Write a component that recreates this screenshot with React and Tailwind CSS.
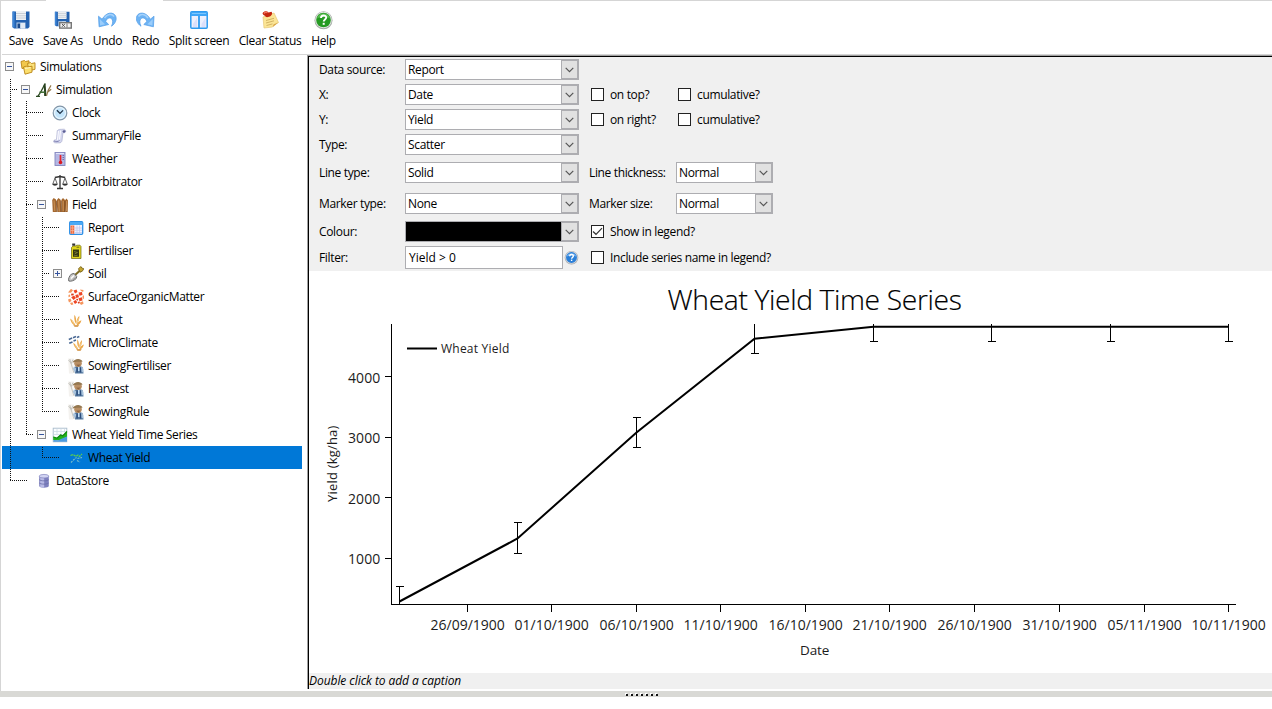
import React from 'react';

/* ---------- toolbar icons (20 x 20) ---------- */

const Floppy = () => (
  <>
    <path d="M1.500 1.500h17v15.500l-1.500 1.500H3L1.500 17z" fill="#2462b0" />
    <path d="M1.500 1.500h2v16h-2z" fill="#3f86d6" />
    <path d="M5 1h10v9H5z" fill="#eef1f4" />
    <path d="M5 3.500h10M5 5.800h10M5 8h10" stroke="#c3cad2" strokeWidth="0.900" />
    <path d="M5.500 12.500h9v6h-9z" fill="#b9cfe6" />
    <path d="M6.500 13.500h2.500v4.500H6.500z" fill="#1c4a8c" />
    <path d="M10 13h4v5.500h-4z" fill="#e3ebf4" />
  </>
);

const CurvedArrow = () => (
  <>
    <path
      d="M1 6.200L1.600 16.800l9.600-2.300-3-2.900C9 8.600 12 6.800 14 8.600c1.600 1.600 1.600 4.400 0 7.600 4-2.600 5.500-7 4.200-10C16.200 2 9.400 1.200 4.600 9.200z"
      fill="#6db3f4"
      stroke="#5aa2ea"
      strokeWidth="0.800"
      strokeLinejoin="round"
    />
    <path d="M7 8c2.500-4 7.500-4.800 9.500-1.500" stroke="#a5d2fb" strokeWidth="1.600" fill="none" />
    <path d="M2.200 9l.4 6.500 5-1.200z" fill="#9bcdfb" />
  </>
);

const toolIcons = {
  save: (
    <svg width="20" height="20" viewBox="0 0 20 20">
      <Floppy />
    </svg>
  ),
  saveAs: (
    <svg width="20" height="20" viewBox="0 0 20 20">
      <g transform="translate(0.600 0.400) scale(0.860)">
        <Floppy />
      </g>
      <rect x="6.700" y="12.700" width="11.600" height="5.400" fill="#f2f2f2" stroke="#777" strokeWidth="1.400" />
      <path d="M9 14l2.800 2.800M11.800 14L9 16.800" stroke="#444" strokeWidth="0.900" />
      <path d="M14 13.500v4" stroke="#777" strokeWidth="1" />
    </svg>
  ),
  undo: (
    <svg width="20" height="20" viewBox="0 0 20 20">
      <g transform="translate(-0.500 0)">
        <CurvedArrow />
      </g>
    </svg>
  ),
  redo: (
    <svg width="20" height="20" viewBox="0 0 20 20">
      <g transform="translate(19 0) scale(-1 1)">
        <CurvedArrow />
      </g>
    </svg>
  ),
  split: (
    <svg width="20" height="20" viewBox="0 0 20 20">
      <rect x="1.800" y="1.800" width="16.400" height="16.400" rx="1" fill="#eef0fd" stroke="#2f9af0" strokeWidth="1.500" />
      <path d="M2 2h16v4H2z" fill="#3fa6f7" />
      <path d="M3 3h14v1H3z" fill="#7cc6ff" />
      <path d="M10 6v12" stroke="#2f9af0" strokeWidth="1.800" />
      <path d="M4 14l4-6v9H4zM12.500 14l4-6v9h-4z" fill="#dcdffa" />
    </svg>
  ),
  clear: (
    <svg width="20" height="20" viewBox="0 0 20 20">
      <path d="M3 7L14 3l4.500 9.500-4.500 2-1.500 2.500-8.500 1z" fill="#fbe596" stroke="#e6c878" strokeWidth="0.700" />
      <path d="M13.500 14.500l5-2-5.600 4.600z" fill="#d9a441" />
      <path d="M6 10.500l8-2.200M6 13l8-2.200M6.500 15.500l6-1.600" stroke="#c8a658" strokeWidth="0.800" />
      <path d="M2.500 3.200c1.500-2.300 4.500-2.500 6-.8l3-.7c1.500 1.500 0 4.500-2.500 5-2 .8-3.500.5-4-.9-1-.3-2-1-2.500-2.600z" fill="#c4260f" />
      <path d="M4 3.500c1-1.500 2.500-1.500 3.500-.7" stroke="#f0705a" strokeWidth="1.400" fill="none" />
    </svg>
  ),
  help: (
    <svg width="20" height="20" viewBox="0 0 20 20">
      <circle cx="9.500" cy="10.300" r="9" fill="#a3aaa4" />
      <circle cx="9.500" cy="10" r="8.300" fill="#e4e8e4" />
      <circle cx="9.500" cy="10" r="7.300" fill="#259a22" />
      <path d="M3 8.500a6.700 6.700 0 0113 0C12.500 6.500 6.500 6.500 3 8.500z" fill="#6cc964" opacity=".7" />
      <path d="M7 8c0-3.400 5.200-3.200 5.200-.4 0 1.900-2.500 1.900-2.500 4" stroke="#fff" strokeWidth="1.900" fill="none" />
      <rect x="8.700" y="12.800" width="2" height="2" fill="#fff" />
    </svg>
  ),
};

/* ---------- tree icons (16 x 16) ---------- */

const Farmer = (
  <>
    <path d="M0 .5h6l-1 15H1z" fill="#f4f2ef" />
    <path d="M0.500 2l3 4M1.800 1l1.300 4.500L5 1.500M3.200 6L6 15" stroke="#bdbbb5" strokeWidth="0.800" fill="none" />
    <path d="M6.200 9l4-1.500 4.300 1.500 1 6.500H7z" fill="#55789f" />
    <path d="M6 8.500L4.800 11l2.400 3.500 1.200-4zM13.200 8.500l2.300 2.500v4l-2-1.500z" fill="#a9c3dc" />
    <path d="M8.500 9.500h1.300v5H8.500zM11.800 9.500H13v5h-1.200z" fill="#2b4c7c" />
    <path d="M10 9h1.500v4H10z" fill="#c2dcf2" />
    <ellipse cx="10" cy="5.300" rx="3.800" ry="3.600" fill="#b98f64" />
    <path d="M4.500 4.600C6 .3 13-.3 14.600 3.600c-2 .6-6.500-.4-10.100 1z" fill="#94774f" />
    <path d="M8 6.800l4.500-.2-2 2z" fill="#8d6340" />
  </>
);

const wheatStalks = (
  <>
    <path d="M7.500 14C6 10 4 7.500 1.500 6c.4 3.500 2.500 7 6 8zM7.800 12C6 8.500 5.800 5 6.300 2c1.800 2.500 2.300 6 1.500 10zM8.500 12.500c-.5-4 1-7 3.200-9.500.3 3.500-.8 7-3.200 9.500zM8.500 14c1-3.500 3-5 5.500-6-.6 3-2.500 5.500-5.500 6z" fill="#eba748" />
    <path d="M5 13.500h6.500l-1.500 1.700H6.500z" fill="#d08a32" />
    <path d="M3.300 8.500L6.500 12.500M11 6L9 11" stroke="#fbdca0" strokeWidth="0.900" />
  </>
);

const treeIcons = {
  folders: (
    <>
      <path d="M1 2.500l3.500-1 1 1 3.500-.7v6.500L2 9.500z" fill="#f2c84c" stroke="#b98516" strokeWidth="0.900" />
      <path d="M7.500 4.500l3-1 1 1 3.500-.7v6.500l-6 1.500z" fill="#fbe27c" stroke="#b98516" strokeWidth="0.900" />
      <path d="M3.500 8l3-1 1 1 4.500-.8v6l-7 2z" fill="#fbdf6e" stroke="#b98516" strokeWidth="0.900" />
      <path d="M5 9.500l5.500-1" stroke="#fff6c4" strokeWidth="1" />
    </>
  ),
  apsim: (
    <>
      <path d="M0 14.300h4M1.800 14.200C4.500 11 7 6 9 1.500" stroke="#2c4a22" strokeWidth="1.300" fill="none" />
      <path d="M7.800 3L9.500 1.200 10.500 14H8.200z" fill="#28401e" />
      <path d="M3.500 10.200h6" stroke="#3c6a30" strokeWidth="1.500" />
      <path d="M10.500 13.800c.5-3.500 2-7 4.500-10.500M11.200 10.500l4-3.300" stroke="#94794a" strokeWidth="1.200" fill="none" />
    </>
  ),
  clock: (
    <>
      <circle cx="8" cy="8" r="6.800" fill="#d3ebfb" stroke="#8296a8" strokeWidth="1.200" />
      <circle cx="8" cy="8" r="5.400" fill="#c3e5fb" stroke="#f4fbff" strokeWidth="0.800" />
      <path d="M4.900 5.200L8 8.400l3-3" stroke="#1f3044" strokeWidth="1.300" fill="none" />
    </>
  ),
  scroll: (
    <>
      <path d="M5.500 2.500c1-1.500 3-1 6-1.300 2.500-.2 3 3 1 3.500h-1.500l-1 8c-.3 1.500-1.500 2.300-3 2.200-2.300-.1-4.500.5-5.500-1 0-1.500.6-2 2-2 1.500-.2 1-3 1.800-9.400z" fill="#d4d6ee" stroke="#a5a7c9" strokeWidth="0.600" />
      <path d="M6.500 3l-1 9M8.500 2.500l-1 9" stroke="#fafaff" strokeWidth="1.200" />
      <path d="M10.500 3.800c0-2 3.500-2 3 0-.3 1-2 1-2 1z" fill="#5d5f96" />
      <path d="M2 13c2 1 4 .8 5.500-.5" stroke="#7a7cae" fill="none" strokeWidth="0.900" />
    </>
  ),
  thermometer: (
    <>
      <rect x="3" y="1.500" width="10" height="13" fill="#b4b7e4" stroke="#8386bd" strokeWidth="0.900" />
      <path d="M4 2.500h8" stroke="#e2e3fa" />
      <path d="M8.500 4v7" stroke="#e8242a" strokeWidth="1.700" />
      <circle cx="8.500" cy="11.500" r="1.800" fill="#d81a22" />
      <path d="M10.500 4.500H12M10.500 6.500H12M10.500 8.500H12" stroke="#5d60a0" strokeWidth="0.800" />
    </>
  ),
  scales: (
    <>
      <path d="M8 1v13M2.800 3.500L8 2.500l5.200 1M5 14.500h6" stroke="#333" strokeWidth="1.300" fill="none" />
      <path d="M3 4L.8 10h4.400zM13 4l-2.200 6h4.400z" stroke="#555" strokeWidth="0.900" fill="none" />
      <path d="M.3 10h5.400c-.5 2.200-4.900 2.200-5.400 0zM10.300 10h5.400c-.5 2.200-4.900 2.200-5.400 0z" fill="#333" />
    </>
  ),
  fence: (
    <>
      <path d="M.2 3l1.500-2 2.300 1.500.8 12.500H.8zM4.500 3.500L6.500 1l2.300 2 .5 12H5.500zM9.300 3l1.700-2 2 2v12H9.600zM12.800 3.500l1.700-2 1.500 2-.3 11.500h-2.400z" fill="#a5682f" />
      <path d="M2 3.500l.8 10.500M6.700 3.500l.6 11M11.200 4v10M14.700 4l-.3 10" stroke="#cd9860" strokeWidth="0.900" />
      <path d="M4.300 4l.7 11M9.100 4l.2 11M12.900 4v11" stroke="#6b3e18" strokeWidth="0.700" />
    </>
  ),
  table: (
    <>
      <rect x="1.700" y="1.700" width="13" height="12.600" rx="1" fill="#eef1fd" stroke="#2b8fe6" strokeWidth="1.300" />
      <path d="M2 2h12.500v3H2z" fill="#4aaaf5" />
      <path d="M2.500 5.500h3.800v8.300H2.500z" fill="#f26a3d" />
      <path d="M6.500 8h7.500M6.500 10.300h7.500M6.500 12.500h7.500M9 5.500v8.500M11.500 5.500v8.500" stroke="#c1c8ee" strokeWidth="0.800" />
      <path d="M4.400 5.500v8.300M2.500 8h3.800M2.500 10.500h3.800" stroke="#f9b49a" strokeWidth="0.700" />
    </>
  ),
  jerrycan: (
    <>
      <path d="M3.500 4.500l1.500-1.500h3l.5-.8h3.500l1 1.300v12H3.500z" fill="#e0d61e" stroke="#6b660c" strokeWidth="0.700" />
      <path d="M4.200.5h3v2.200h-3z" fill="#333" />
      <path d="M8.500 4.200h2.800" stroke="#4e4a08" strokeWidth="0.800" />
      <path d="M5 6.500h6v7.300H5z" fill="#36380f" />
      <path d="M6 8.500l3.500 1M6.500 11l3-1.500M6 12.800l3.500-.5" stroke="#8e8e40" strokeWidth="0.700" />
    </>
  ),
  shovel: (
    <>
      <path d="M6.500 9.500L12 4.500" stroke="#7d6a24" strokeWidth="2" />
      <path d="M10.500 2.800l2.300-2.300 1 1.500 2 .7-1.500 2.500-2.300 1z" fill="#c4a531" stroke="#7b6518" strokeWidth="0.900" />
      <path d="M3.500 8l2.700-.5 2.500 3-.5 2C6.200 14.500 3 15.700.8 15c-.8-2.500.7-5 2.700-7z" fill="#c8c8c8" stroke="#666" strokeWidth="1" />
      <path d="M3 12.500l3-3" stroke="#fff" strokeWidth="1.300" />
      <path d="M4.500 14l3-2.500" stroke="#8a8a8a" strokeWidth="0.900" />
    </>
  ),
  organic: (
    <>
      <path
        d="M5.500 1.500l3-1 1 2.500-2.500 1.500zM10.500 3.500l3.500-.5.500 3-3 .8zM7.300 6l3-.8.700 3-2.800.8zM3.200 8.300L6 6.500l2 2.500-2.500 2zM10.500 9.300l3.500-1 .5 3.200-3 .7zM5.300 12.500l2.200-1.600 2 2.300L7 15z"
        fill="#ee4524"
      />
      <path
        d="M0 3.500L3-.2l2 1.500-2 2.500zM0 10.500l2.500-1 1 2.500-2.500 1.500zM12 .5l3.500.5-.3 2-2.200-1zM14.500 7l1.500-.8V10l-1.500-.8zM11.500 13.800l3.500-1.500.5 2.500-2.500 1.200zM2 14l2.500-.8.800 2.300-2 .5zM.5 6l1.500-.5.300 2-1.800.7z"
        fill="#f6955c"
      />
      <path d="M3 4.800l2.500-.3.300 1.500-2.300.8zM8.500 9.800l1.700.3-.5 1.600-1.500-.6zM9.800 13.300l1.500-1 .6 1.700-1.500.8z" fill="#d83a1c" />
    </>
  ),
  wheat: <g transform="translate(0.800 1) scale(0.900)">{wheatStalks}</g>,
  microclimate: (
    <>
      <g transform="translate(4 2.500) scale(0.850 0.870)">{wheatStalks}</g>
      <path d="M.8 4.500l3.300-1.400M5 2.700l3-1.200M1.200 8.300l3.300-1.400M5.500 6l2.500-1M9 2.500l2.300-.9" stroke="#4a6994" strokeWidth="1.600" />
    </>
  ),
  farmer: Farmer,
  graph: (
    <>
      <rect x="1.200" y="1.200" width="13.600" height="13.600" fill="#fbfdff" stroke="#a9bccb" strokeWidth="0.900" />
      <path d="M1.500 4.500h13M5 1.500v6M9 1.500v6M12.500 1.500v4M1.500 7.500h13" stroke="#c9d7e2" strokeWidth="0.700" />
      <path d="M1.200 9.500l3.500 1.200L8.500 7.500l2 1 4.500-4.500v6l-7 3.500-6.800-.5z" fill="#22b21e" />
      <path d="M1.500 13l5 .3L10 11.500l5-2v5.200H1.500z" fill="#4c9be0" />
      <path d="M1.500 10l3.500 1.200L8.700 8l2 .8L15 4.500" stroke="#12880f" strokeWidth="1.100" fill="none" />
    </>
  ),
  series: (
    <>
      <path d="M2.500 5.500L5 4.500l3 2L10 5l1.500 1.500L14 4" stroke="#5fd04a" strokeWidth="1.200" fill="none" strokeDasharray="2.500 0.800" />
      <path d="M3 12.500L6 9.500l2.500-2M9.500 8.500l4.500-1M9 10.500l3 1.500" stroke="#7fc0c8" strokeWidth="1.100" fill="none" strokeDasharray="2 1" />
    </>
  ),
  database: (
    <>
      <path d="M3.200 3.200v9.800c0 2.200 9.600 2.200 9.600 0V3.200z" fill="#7d80bf" />
      <path d="M4.200 4v10c1.200.6 2.500.8 4 .8V4z" fill="#b9bbe6" />
      <ellipse cx="8" cy="3.200" rx="4.800" ry="1.800" fill="#d2d4f2" stroke="#8083bd" strokeWidth="0.700" />
      <path d="M3.200 6.500c1 1.800 8.600 1.800 9.600 0M3.200 9.800c1 1.800 8.600 1.800 9.600 0" stroke="#6a6da8" strokeWidth="0.800" fill="none" />
    </>
  ),
};

/* guides: for every depth column, does the vertical line run through the row? */
const tree = [
  { label: 'Simulations', icon: 'folders', depth: 0, box: '-', guides: [] },
  { label: 'Simulation', icon: 'apsim', depth: 1, box: '-', guides: ['full'] },
  { label: 'Clock', icon: 'clock', depth: 2, guides: ['full', 'full'] },
  { label: 'SummaryFile', icon: 'scroll', depth: 2, guides: ['full', 'full'] },
  { label: 'Weather', icon: 'thermometer', depth: 2, guides: ['full', 'full'] },
  { label: 'SoilArbitrator', icon: 'scales', depth: 2, guides: ['full', 'full'] },
  { label: 'Field', icon: 'fence', depth: 2, box: '-', guides: ['full', 'full'] },
  { label: 'Report', icon: 'table', depth: 3, guides: ['full', 'full', 'full'] },
  { label: 'Fertiliser', icon: 'jerrycan', depth: 3, guides: ['full', 'full', 'full'] },
  { label: 'Soil', icon: 'shovel', depth: 3, box: '+', guides: ['full', 'full', 'full'] },
  { label: 'SurfaceOrganicMatter', icon: 'organic', depth: 3, guides: ['full', 'full', 'full'] },
  { label: 'Wheat', icon: 'wheat', depth: 3, guides: ['full', 'full', 'full'] },
  { label: 'MicroClimate', icon: 'microclimate', depth: 3, guides: ['full', 'full', 'full'] },
  { label: 'SowingFertiliser', icon: 'farmer', depth: 3, guides: ['full', 'full', 'full'] },
  { label: 'Harvest', icon: 'farmer', depth: 3, guides: ['full', 'full', 'full'] },
  { label: 'SowingRule', icon: 'farmer', depth: 3, guides: ['full', 'full', 'half'] },
  { label: 'Wheat Yield Time Series', icon: 'graph', depth: 2, box: '-', guides: ['full', 'half'] },
  { label: 'Wheat Yield', icon: 'series', depth: 3, guides: ['full', 'none', 'half'], selected: true },
  { label: 'DataStore', icon: 'database', depth: 1, guides: ['half'] },
];

function TreeRow({ row, index }) {
  const w = row.depth * 16 + 18;
  const lineX = row.depth * 16 - 8;
  return (
    <div className={row.selected ? 'flex h-[23px] w-[300px] items-center bg-[#0078d7]' : 'flex h-[23px] w-[300px] items-center'}>
      <svg className="shrink-0" width={w} height="23" shapeRendering="crispEdges">
        {row.guides.map((g, i) =>
          g === 'none' ? null : (
            <line key={i} x1={i * 16 + 8.5} x2={i * 16 + 8.5} y1="0" y2={g === 'full' ? 23 : 12} stroke="#111" strokeDasharray="1 1" strokeDashoffset={index % 2} />
          )
        )}
        {row.depth > 0 && <line x1={lineX} x2={lineX + (row.box ? 7 : 17)} y1="11.500" y2="11.500" stroke="#111" strokeDasharray="1 1" />}
        {row.box && (
          <>
            <rect x={row.depth * 16 + 3.5} y="7.500" width="8" height="8" fill="#f7f7f7" stroke="#8c8c8c" />
            <path d={`M${row.depth * 16 + 5} 11.500h5${row.box === '+' ? 'm-2.500-2.500v5' : ''}`} stroke="#35549e" fill="none" />
          </>
        )}
      </svg>
      <svg className="mr-[4px] shrink-0" width="16" height="16" viewBox="0 0 16 16">
        {treeIcons[row.icon]}
      </svg>
      <span>{row.label}</span>
    </div>
  );
}

/* ---------- form controls ---------- */

function Combo({ value, narrow, black }) {
  return (
    <div className={`flex h-[21px] shrink-0 border border-[#adadb1] ${narrow ? 'w-[97px]' : 'w-[174px]'}`}>
      <div className={`flex flex-1 items-center pl-[2px] ${black ? 'bg-black' : 'bg-white'}`}>{value}</div>
      <div className="flex w-[17px] items-center justify-center border border-[#adadb1] bg-[#e1e1e1]">
        <svg width="9" height="6" viewBox="0 0 9 6">
          <path d="M0.700 0.900L4.500 4.600L8.300 0.900" fill="none" stroke="#555" strokeWidth="1.200" />
        </svg>
      </div>
    </div>
  );
}

function Check({ label, checked, className = '' }) {
  return (
    <div className={`flex items-center gap-[6px] ${className}`}>
      <span className="flex h-[13px] w-[13px] shrink-0 items-center justify-center border border-[#222] bg-white">
        {checked && (
          <svg width="11" height="11" viewBox="0 0 11 11">
            <path d="M1 5.500L4 8.300L10 2.200" fill="none" stroke="#333" strokeWidth="1.200" />
          </svg>
        )}
      </span>
      <span>{label}</span>
    </div>
  );
}

const Label = ({ children }) => <span className="w-[86px] shrink-0">{children}</span>;

function HelpDot() {
  return (
    <svg className="ml-[1px] shrink-0" width="15" height="15" viewBox="0 0 15 15">
      <circle cx="7.500" cy="7.800" r="6.800" fill="#a3a6ab" />
      <circle cx="7.500" cy="7.500" r="6.300" fill="#d3d6db" />
      <circle cx="7.500" cy="7.500" r="5.400" fill="#2a7fd8" />
      <path d="M2.800 6.500a5 5 0 019.400 0c-3-1.400-6.500-1.400-9.400 0z" fill="#7db8f2" />
      <path d="M5.700 6.300c0-2.500 3.700-2.300 3.700-.2 0 1.300-1.800 1.300-1.800 2.700" stroke="#fff" strokeWidth="1.300" fill="none" />
      <rect x="6.900" y="9.600" width="1.400" height="1.400" fill="#fff" />
    </svg>
  );
}

/* ---------- chart ---------- */

const xTicks = [
  [158.5, '26/09/1900'],
  [242.5, '01/10/1900'],
  [327.5, '06/10/1900'],
  [411.5, '11/10/1900'],
  [496.5, '16/10/1900'],
  [580.5, '21/10/1900'],
  [665.5, '26/10/1900'],
  [750.5, '31/10/1900'],
  [835.5, '05/11/1900'],
  [919.5, '10/11/1900'],
];
const yTicks = [
  [105.5, 112, '4000'],
  [166.5, 172, '3000'],
  [226.5, 233, '2000'],
  [287.5, 293, '1000'],
];
/* x, y, top of the error bar, bottom of the error bar (null = clipped by the plot area) */
const points = [
  [90.5, 330.5, 315.5, null],
  [208.5, 267.5, 251.5, 282.5],
  [327.5, 161.5, 146.5, 176.5],
  [445.5, 67.7, null, 82.5],
  [564.5, 55.7, null, 70.5],
  [682.5, 55.7, null, 70.5],
  [801.5, 55.7, null, 70.5],
  [919.5, 55.7, null, 70.5],
];

function Chart() {
  return (
    <svg className="block shrink-0 bg-white font-['Open_Sans','Noto_Sans',sans-serif]" width="963" height="402" fill="#1c1c1c">
      <text x="358.500" y="39" fontSize="27" fontWeight="300" textLength="294" lengthAdjust="spacingAndGlyphs" fill="#000" stroke="#000" strokeWidth="0.150">
        Wheat Yield Time Series
      </text>
      <g stroke="#000" strokeWidth="1" shapeRendering="crispEdges">
        <path d="M82.500 53V334M82 333.500H927" fill="none" />
        {yTicks.map(([y]) => (
          <path key={y} d={`M76 ${y}h6`} />
        ))}
        {xTicks.map(([x]) => (
          <path key={x} d={`M${x} 334v7`} />
        ))}
        {points.map(([x, , top, bottom]) => (
          <g key={x}>
            <path d={`M${x} ${top ?? 53}V${bottom ?? 333}`} />
            {top && <path d={`M${x - 4} ${top}h8`} />}
            {bottom && <path d={`M${x - 4} ${bottom}h8`} />}
          </g>
        ))}
      </g>
      <polyline points={points.map(([x, y]) => `${x},${y}`).join(' ')} fill="none" stroke="#000" strokeWidth="2" />
      <path d="M98 77.500h30" stroke="#000" strokeWidth="2" />
      <text x="132" y="82" fontSize="12" textLength="68">
        Wheat Yield
      </text>
      {yTicks.map(([, y, t]) => (
        <text key={t} x="39" y={y} fontSize="14" textLength="32">
          {t}
        </text>
      ))}
      {xTicks.map(([x, t]) => (
        <text key={t} x={x - 37} y="359" fontSize="14" textLength="74">
          {t}
        </text>
      ))}
      <text x="491" y="384" fontSize="13.500" textLength="29">
        Date
      </text>
      <text transform="translate(28 231) rotate(-90)" fontSize="13" textLength="76">
        Yield (kg/ha)
      </text>
    </svg>
  );
}

/* ---------- toolbar ---------- */

const tools = [
  ['save', 'Save', 'w-[34px]'],
  ['saveAs', 'Save As', 'w-[50px]'],
  ['undo', 'Undo', 'w-[39px]'],
  ['redo', 'Redo', 'w-[37px]'],
  ['split', 'Split screen', 'w-[70px]'],
  ['clear', 'Clear Status', 'w-[72px]'],
  ['help', 'Help', 'w-[35px]'],
];

export default function App() {
  return (
    <div className="flex h-[709px] w-[1272px] flex-col overflow-hidden bg-white font-['Open_Sans','Noto_Sans',sans-serif] text-[12px] leading-[16px] tracking-[-0.35px] whitespace-nowrap text-black">
      <div className="flex h-[691px] flex-col border-l border-[#d5d5d5]">
        <div className="flex h-px shrink-0">
          <div className="w-[45px] bg-[#d5d5d5]" />
          <div className="w-[117px]" />
          <div className="flex-1 bg-[#d5d5d5]" />
        </div>
        <div className="ml-px flex h-[54px] shrink-0 border-b border-[#d5d5d5] pl-[2px] pt-[9px]">
          {tools.map(([id, label, width]) => (
            <div key={id} className={`flex shrink-0 flex-col items-center ${width}`}>
              {toolIcons[id]}
              <span className="mt-[3px]">{label}</span>
            </div>
          ))}
        </div>
        <div className="flex min-h-0 flex-1">
          <div className="w-[306px] shrink-0 pl-px">
            {tree.map((row, i) => (
              <TreeRow key={row.label} row={row} index={i} />
            ))}
          </div>
          <div className="flex h-[634px] w-[965px] flex-col border-l border-t border-[#a0a0a0]">
            <div className="flex min-h-0 flex-1 flex-col border-l border-t border-black">
              <div className="flex h-[214px] shrink-0 flex-col bg-[#f0f0f0] pl-[10px]">
                <div className="flex h-[25px] items-center">
                  <Label>Data source:</Label>
                  <Combo value="Report" />
                </div>
                <div className="flex h-[25px] items-center">
                  <Label>X:</Label>
                  <Combo value="Date" />
                  <Check className="ml-[12px] w-[87px]" label="on top?" />
                  <Check label="cumulative?" />
                </div>
                <div className="flex h-[25px] items-center">
                  <Label>Y:</Label>
                  <Combo value="Yield" />
                  <Check className="ml-[12px] w-[87px]" label="on right?" />
                  <Check label="cumulative?" />
                </div>
                <div className="flex h-[25px] items-center">
                  <Label>Type:</Label>
                  <Combo value="Scatter" />
                </div>
                <div className="flex h-[31px] items-center">
                  <Label>Line type:</Label>
                  <Combo value="Solid" />
                  <span className="ml-[10px] w-[87px]">Line thickness:</span>
                  <Combo narrow value="Normal" />
                </div>
                <div className="flex h-[31px] items-center">
                  <Label>Marker type:</Label>
                  <Combo value="None" />
                  <span className="ml-[10px] w-[87px]">Marker size:</span>
                  <Combo narrow value="Normal" />
                </div>
                <div className="flex h-[25px] items-center">
                  <Label>Colour:</Label>
                  <Combo black />
                  <Check className="ml-[12px]" checked label="Show in legend?" />
                </div>
                <div className="flex h-[27px] items-center">
                  <Label>Filter:</Label>
                  <div className="flex h-[23px] w-[158px] items-center border border-[#adadb1] bg-white pl-[3px] tracking-normal">Yield &gt; 0</div>
                  <HelpDot />
                  <Check className="ml-[12px]" label="Include series name in legend?" />
                </div>
              </div>
              <Chart />
              <div className="h-[16px] shrink-0 bg-[#f0f0f0] tracking-[-0.06px] italic">Double click to add a caption</div>
            </div>
          </div>
        </div>
      </div>
      <div className="flex h-[6px] shrink-0 items-center bg-[#d9d9d5] pl-[625px]">
        <svg width="36" height="5" shapeRendering="crispEdges">
          {[0, 5, 10, 15, 20, 25, 30].map((x) => (
            <g key={x}>
              <rect x={x} y="1" width="2" height="2" fill="#fff" />
              <rect x={x + 1} y="2" width="2" height="2" fill="#111" />
            </g>
          ))}
        </svg>
      </div>
    </div>
  );
}
